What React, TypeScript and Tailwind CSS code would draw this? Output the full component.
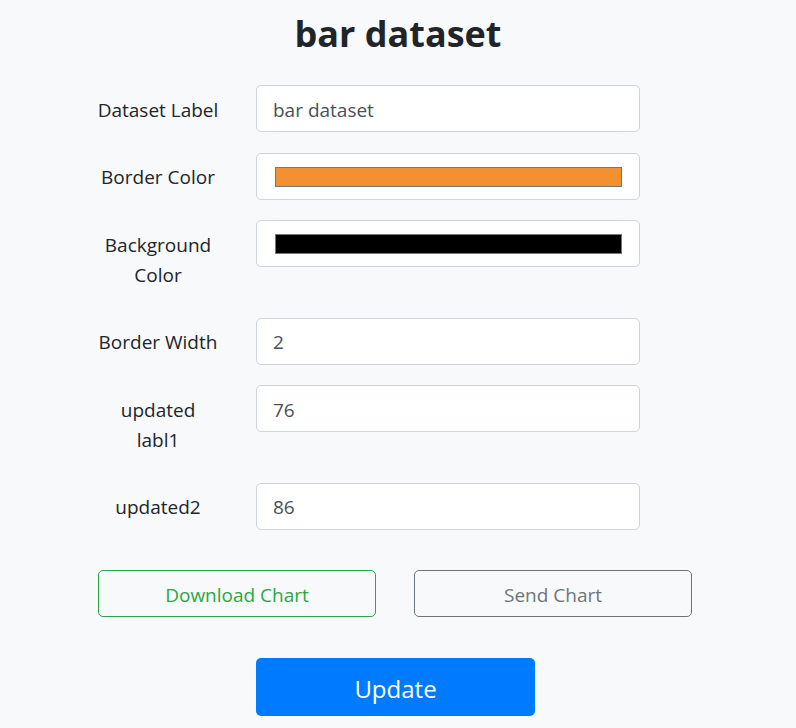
import React from "react";

const font = { fontFamily: '"Open Sans", "Noto Sans", sans-serif' };

function Label({ children }: { children: React.ReactNode }) {
  return (
    <div className="w-[156px] shrink-0 text-center text-[19px] leading-[30px] pt-[9.5px] pb-[7.5px] whitespace-nowrap text-[#212529]">
      {children}
    </div>
  );
}

function TextBox({ value }: { value: string }) {
  return (
    <div className="w-[384px] h-[47px] shrink-0 bg-white border border-[#ced4da] rounded-[5px] px-[16px] pt-[3px] flex items-center text-[19px] text-[#495057]">
      {value}
    </div>
  );
}

function ColorBox({ color }: { color: string }) {
  return (
    <div className="w-[384px] h-[47px] shrink-0 bg-white border border-[#ced4da] rounded-[5px] pl-[18px] pr-[17px] pt-[13px]">
      <div className="h-[20px] border border-[#767676]" style={{ backgroundColor: color }} />
    </div>
  );
}

export default function App() {
  return (
    <div className="min-h-screen bg-[#f8f9fa]" style={font}>
      <h2 className="text-center font-bold text-[36px] leading-[44px] pt-[12px] pb-[1px] text-[#212529]">bar dataset</h2>
      <div className="ml-[80px] mt-[28px] flex flex-col gap-[20.5px]">
        <div className="flex gap-[20px] items-start">
          <Label>Dataset Label</Label>
          <TextBox value="bar dataset" />
        </div>
        <div className="flex gap-[20px] items-start">
          <Label>Border Color</Label>
          <ColorBox color="#f39030" />
        </div>
        <div className="flex gap-[20px] items-start">
          <Label>
            Background
            <br />
            Color
          </Label>
          <ColorBox color="#000000" />
        </div>
        <div className="flex gap-[20px] items-start">
          <Label>Border Width</Label>
          <TextBox value="2" />
        </div>
        <div className="flex gap-[20px] items-start">
          <Label>
            updated
            <br />
            labl1
          </Label>
          <TextBox value="76" />
        </div>
        <div className="flex gap-[20px] items-start">
          <Label>updated2</Label>
          <TextBox value="86" />
        </div>
      </div>
      <div className="ml-[98px] mt-[40.5px] flex gap-[38px]">
        <button className="w-[278px] h-[47px] pt-[3px] border border-[#28a745] rounded-[5px] text-[#28a745] text-[19px] bg-transparent">
          Download Chart
        </button>
        <button className="w-[278px] h-[47px] pt-[3px] border border-[#6c757d] rounded-[5px] text-[#6c757d] text-[19px] bg-transparent">
          Send Chart
        </button>
      </div>
      <div className="ml-[256px] mt-[41px] pb-[12px]">
        <button className="w-[279px] h-[58px] pt-[3px] bg-[#007bff] rounded-[5px] text-white text-[24px]">
          Update
        </button>
      </div>
    </div>
  );
}
